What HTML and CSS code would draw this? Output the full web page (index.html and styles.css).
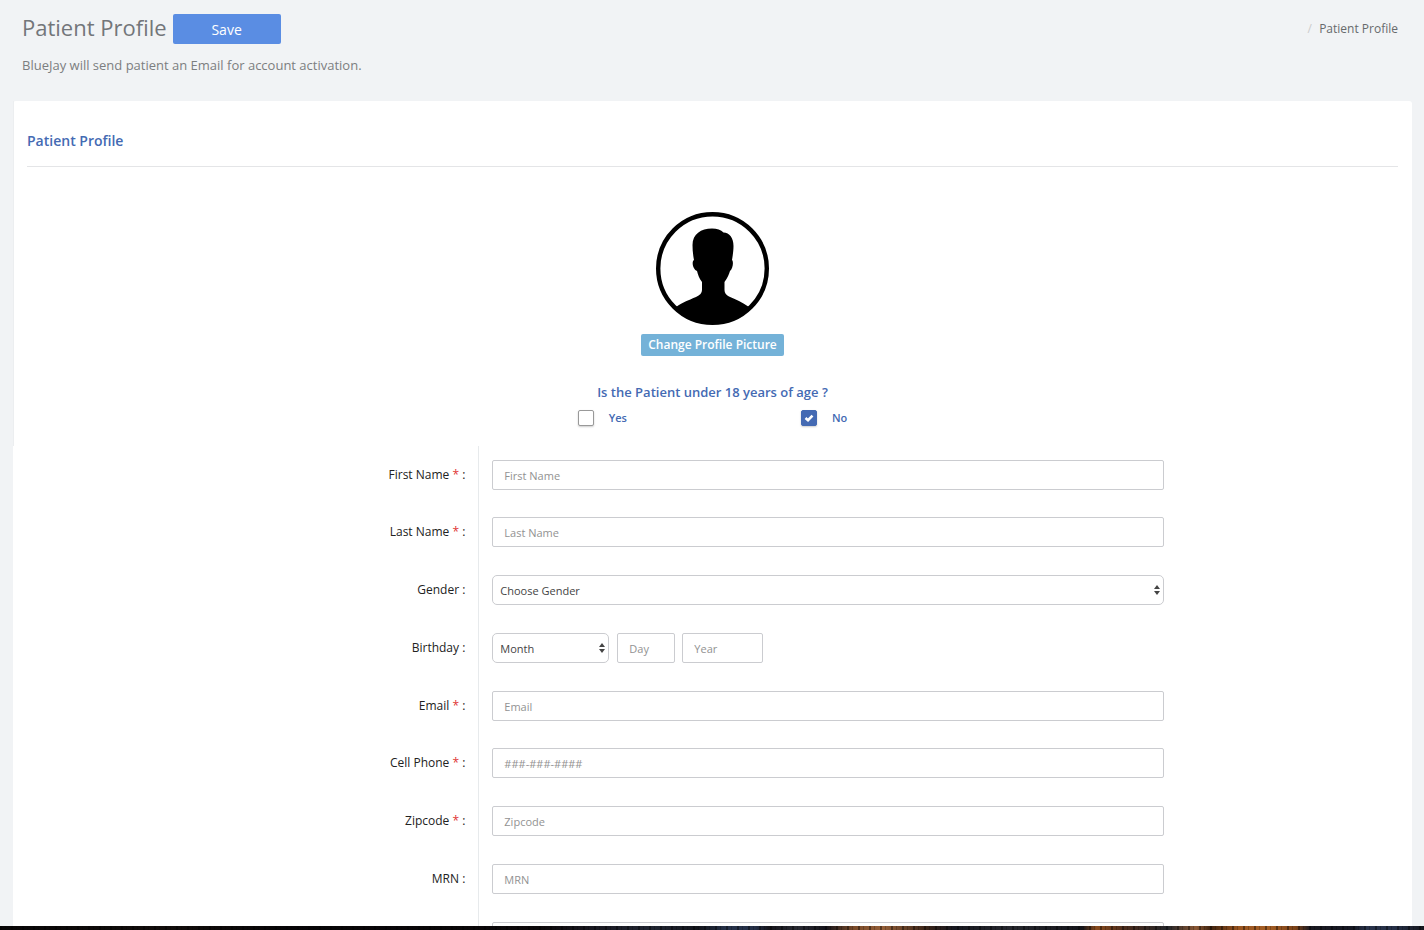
FILE: index.html
```
<!DOCTYPE html>
<html lang="en">
<head>
    <meta charset="UTF-8">
    <meta name="viewport" content="width=device-width, initial-scale=1.0">
    <title>Patient Profile</title>
    <link rel="stylesheet" href="styles.css">
</head>
<body>

<main class="page">
    <header class="page-header">
        <div class="title-row">
            <h1>Patient Profile</h1>
            <button type="submit" form="patientForm" class="save-btn">Save</button>
            <nav class="breadcrumb" aria-label="Breadcrumb">
                <span class="separator">/</span>
                <a href="#">Patient Profile</a>
            </nav>
        </div>
        <p class="subtitle">BlueJay will send patient an Email for account activation.</p>
    </header>

    <form id="patientForm" class="panel">
        <section class="panel-top">
            <h2>Patient Profile</h2>

            <!-- Profile picture -->
            <div class="picture">
                <svg class="avatar" viewBox="0 0 113 113" role="img" aria-label="Profile picture">
                    <defs>
                        <clipPath id="avatarClip"><circle cx="56.5" cy="56.5" r="55"/></clipPath>
                    </defs>
                    <circle cx="56.5" cy="56.5" r="54.3" fill="#fff" stroke="#000" stroke-width="4.4"/>
                    <path clip-path="url(#avatarClip)" d="M36.500 33C36.500 22 45 16.500 56 16.500C61 16.500 65 18 67.500 20.500C73.500 20.500 77.500 26 77.500 34C77.500 39 76.800 43 76 48C78 50 76.500 57 74 59C73 62 71.500 66 68.500 70V78C68.500 81 70 83 73 84.500C80 87.500 86 90 93 95V113H20V95C27 90 33 88 40 85C44 83 46 81 46 78V70C43 66 42 63 41 59C37.500 58 35 50 38 48C37 43 36.500 38 36.500 33Z"/>
                </svg>
                <button type="button" class="picture-btn">Change Profile Picture</button>
            </div>

            <!-- Age question -->
            <fieldset class="age">
                <legend>Is the Patient under 18 years of age ?</legend>
                <div class="age-options">
                    <label><input type="checkbox" name="minorYes">Yes</label>
                    <label><input type="checkbox" name="minorNo" checked>No</label>
                </div>
            </fieldset>
        </section>

        <div class="rows">
            <div class="form-row">
                <label for="firstName">First Name <span class="required">*</span> :</label>
                <div class="field"><input type="text" id="firstName" placeholder="First Name"></div>
            </div>
            <div class="form-row">
                <label for="lastName">Last Name <span class="required">*</span> :</label>
                <div class="field"><input type="text" id="lastName" placeholder="Last Name"></div>
            </div>
            <div class="form-row">
                <label for="gender">Gender :</label>
                <div class="field">
                    <select id="gender">
                        <option>Choose Gender</option>
                        <option>Male</option>
                        <option>Female</option>
                    </select>
                </div>
            </div>
            <div class="form-row">
                <label for="month">Birthday :</label>
                <div class="field birthday">
                    <select id="month" class="month">
                        <option>Month</option>
                        <option>January</option>
                        <option>February</option>
                        <option>March</option>
                        <option>April</option>
                        <option>May</option>
                        <option>June</option>
                        <option>July</option>
                        <option>August</option>
                        <option>September</option>
                        <option>October</option>
                        <option>November</option>
                        <option>December</option>
                    </select>
                    <input type="text" class="day" placeholder="Day" aria-label="Day">
                    <input type="text" class="year" placeholder="Year" aria-label="Year">
                </div>
            </div>
            <div class="form-row">
                <label for="email">Email <span class="required">*</span> :</label>
                <div class="field"><input type="email" id="email" placeholder="Email"></div>
            </div>
            <div class="form-row">
                <label for="phone">Cell Phone <span class="required">*</span> :</label>
                <div class="field"><input type="tel" id="phone" placeholder="###-###-####"></div>
            </div>
            <div class="form-row">
                <label for="zipcode">Zipcode <span class="required">*</span> :</label>
                <div class="field"><input type="text" id="zipcode" placeholder="Zipcode"></div>
            </div>
            <div class="form-row">
                <label for="mrn">MRN :</label>
                <div class="field"><input type="text" id="mrn" placeholder="MRN"></div>
            </div>
            <div class="form-row">
                <label for="notes"></label>
                <div class="field"><input type="text" id="notes" aria-label="Notes"></div>
            </div>
        </div>
    </form>
</main>

<div class="backdrop"></div>

</body>
</html>
```
FILE: styles.css
```
* {
    box-sizing: border-box;
}

body {
    margin: 0;
    height: 100vh;
    display: flex;
    flex-direction: column;
    overflow: hidden;
    background: #f1f3f5;
    font-family: "Open Sans", "Noto Sans", sans-serif;
    font-size: 12px;
    color: #676a6c;
}

input, select, button {
    font-family: inherit;
}

.page {
    flex: 1;
    min-height: 0;
    overflow: hidden;
    padding: 0 12px 0 13px;
}

/* Header */
.page-header {
    padding: 12px 14px 0 9px;
    height: 101px;
}

.title-row {
    display: flex;
    align-items: flex-start;
}

h1 {
    margin: 0;
    font-size: 22px;
    font-weight: 400;
    line-height: 30px;
    color: #73767a;
}

.save-btn {
    width: 108px;
    height: 30px;
    margin: 2px 0 0 6px;
    padding: 0;
    border: none;
    border-radius: 2px;
    background: #5a8de3;
    color: #fff;
    font-size: 14px;
}

.breadcrumb {
    margin-left: auto;
    line-height: 34px;
}

.breadcrumb .separator {
    padding-right: 4px;
    color: #ccc;
}

.breadcrumb a {
    color: #676a6c;
    text-decoration: none;
}

.subtitle {
    margin: 9px 0 0;
    font-size: 13px;
    line-height: 20px;
    color: #7c7e80;
}

/* Panel */
.panel {
    background: #fff;
    border-radius: 3px;
}

.panel-top {
    padding: 25px 14px 0 13px;
    border-left: 1px solid #eceef0;
    height: 345px;
}

h2 {
    margin: 0;
    padding-bottom: 10px;
    border-bottom: 1px solid #e4e5e7;
    font-size: 14px;
    font-weight: 600;
    line-height: 30px;
    color: #446ab3;
}

.picture {
    display: flex;
    flex-direction: column;
    align-items: center;
    gap: 9px;
    margin-top: 45px;
}

.avatar {
    width: 113px;
    height: 113px;
}

.picture-btn {
    height: 22px;
    padding: 0 7px;
    border: none;
    border-radius: 2px;
    background: #74b2d8;
    color: #fff;
    font-size: 12px;
    font-weight: 600;
    line-height: 20px;
}

.age {
    margin: 26px 0 0;
    padding: 0;
    border: none;
    color: #446ab3;
    font-weight: 600;
}

.age legend {
    margin: 0 auto;
    padding: 0;
    font-size: 13px;
    line-height: 20px;
}

.age-options {
    display: flex;
    justify-content: center;
    gap: 174px;
    margin-top: 8px;
}

.age-options label {
    display: flex;
    align-items: center;
    gap: 15px;
    font-size: 11px;
    line-height: 16px;
}

.age-options input {
    appearance: none;
    width: 16px;
    height: 16px;
    margin: 0;
    border: 1px solid #999;
    border-radius: 2px;
    background: #fff;
    box-shadow: 0 1px 2px rgba(0, 0, 0, 0.2);
}

.age-options input:checked {
    border-color: #446ab3;
    background: #446ab3 url("data:image/svg+xml,%3Csvg xmlns='http://www.w3.org/2000/svg' viewBox='0 0 14 14'%3E%3Cpath d='M3.500 7L6 9.200L10.500 4.600' fill='none' stroke='white' stroke-width='2.600'/%3E%3C/svg%3E") center no-repeat;
}

/* Form rows */
.form-row {
    display: grid;
    grid-template-columns: 4fr 6fr 2fr;
    height: 58px;
}

.form-row:nth-child(4n+1) {
    height: 57px;
}

.form-row > label {
    padding: 19px 13px 0 0;
    border-right: 1px solid #e7eaec;
    text-align: right;
    line-height: 20px;
    color: #222;
}

.required {
    color: #e03434;
}

.field {
    padding: 14px 15px 0 13px;
}

.field input,
.field select {
    display: block;
    width: 100%;
    height: 30px;
    border: 1px solid #cbccd0;
    border-radius: 2px;
    background: #fff;
    font-size: 11px;
    color: #444;
}

.field input {
    padding: 1px 11px 0;
}

.field input::placeholder {
    color: #929292;
    opacity: 1;
}

.field select {
    appearance: none;
    padding: 0 20px 0 7px;
    border-radius: 5px;
    background: #fff url("data:image/svg+xml,%3Csvg xmlns='http://www.w3.org/2000/svg' width='6' height='10' viewBox='0 0 6 10'%3E%3Cpath d='M3 0L6 4H0zM3 10L0 6H6z' fill='%23444'/%3E%3C/svg%3E") right 3px center no-repeat;
}

.birthday {
    display: flex;
}

.field .month {
    width: 117px;
    margin-right: 8px;
}

.field .day {
    width: 58px;
    margin-right: 7px;
}

.field .year {
    width: 81px;
}

/* Dark night-city strip along the bottom edge */
.backdrop {
    height: 4px;
    background:
        repeating-linear-gradient(90deg, rgba(0, 0, 0, 0.4) 0 2px, transparent 2px 5px, rgba(0, 0, 0, 0.2) 5px 6px, transparent 6px 11px),
        linear-gradient(90deg,
        #080607 0%, #120d0b 12%, #060406 20%, #0c080a 38%,
        #191922 42%, #202532 46%, #11131a 49%, #26324a 51%, #253048 53%,
        #14131a 54%, #292a33 56%, #15131a 58%, #7b4b2a 60%, #966039 62%,
        #3b2418 65%, #16171f 67%, #26272e 71%, #14141a 76%, #8a4b1d 77%,
        #4b2b1c 79%, #242529 82%, #8b5835 84%, #40230f 85%, #9a5520 87%,
        #a65f25 89%, #7b4218 91%, #1b1a22 92%, #151722 95%, #2a344c 96%,
        #263047 98%, #15161d 100%);
}
```
